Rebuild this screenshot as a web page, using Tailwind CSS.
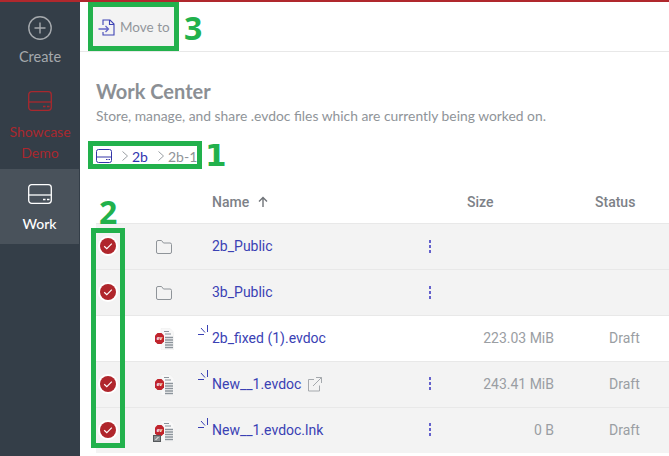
<!DOCTYPE html>
<html lang="en">
<head>
    <meta charset="UTF-8" />
    <title>Work Center</title>
    <script src="https://cdn.jsdelivr.net/npm/@tailwindcss/browser@4"></script>
</head>
<body class="bg-white font-['Roboto',sans-serif] overflow-hidden">
<div class="relative w-[669px] h-[456px] overflow-hidden">
    <div class="h-[2px] bg-[#b0282d]"></div>
    <div class="flex h-[454px]">
        <!-- sidebar -->
        <aside class="w-[80px] shrink-0 bg-[#343e48] font-['Lato',sans-serif] text-[14px] text-center">
            <div class="h-[82px] pt-[14px] text-[#a5a9ad]">
                <svg class="mx-auto" width="24" height="24" viewBox="0 0 24 24" fill="none" stroke="#a5a9ad" stroke-width="1.4"><circle cx="12" cy="12" r="11.200"/><path d="M12 6.500v11M6.500 12h11"/></svg>
                <div class="mt-[7px] leading-[20px] text-[14.500px]">Create</div>
            </div>
            <div class="h-[85px] pt-[7px] text-[#a9282e]">
                <svg class="mx-auto" width="24" height="20" viewBox="0 0 24 20" fill="none" stroke="#a9282e" stroke-width="1.3"><rect x="0.700" y="0.700" width="22.600" height="18.600" rx="3"/><path d="M0.700 11h22.600"/><path d="M15 15.500h2.500M19 15.500h2.500" stroke-width="1.6"/></svg>
                <div class="mt-[10px] leading-[21px]">Showcase<br />Demo</div>
            </div>
            <div class="h-[75px] w-[79px] bg-[#49525b] pt-[15px] text-white">
                <svg class="mx-auto" width="24" height="20" viewBox="0 0 24 20" fill="none" stroke="#ffffff" stroke-width="1.3"><rect x="0.700" y="0.700" width="22.600" height="18.600" rx="3"/><path d="M0.700 11h22.600"/><path d="M15 15.500h2.500M19 15.500h2.500" stroke-width="1.6"/></svg>
                <div class="mt-[10px] leading-[20px] font-medium">Work</div>
            </div>
        </aside>

        <main class="flex-1 min-w-0">
            <!-- toolbar -->
            <div class="h-[50px] border-b border-[#e8e8e8] pl-[13px] pt-[5px]">
                <div class="flex items-center w-[82px] h-[39px] bg-[#f3f3f3] pl-[5px] pt-[2px] font-['Lato',sans-serif] text-[13.500px] text-[#92969b]">
                    <svg width="17" height="17" viewBox="0 0 17 17" fill="none" stroke="#3f44b5" stroke-width="1.100"><path d="M5 6V1h7l4 4v11H5v-3"/><path d="M11.500 1v4.500H16"/><path d="M0.500 10h10M7.500 7l3 3-3 3" stroke="#6265c8" stroke-width="1.300"/></svg>
                    <span class="ml-[5px]">Move to</span>
                </div>
            </div>

            <div class="pl-[16px]">
                <h1 class="mt-[26px] font-['Lato',sans-serif] font-bold text-[20px] leading-[26px] text-[#8b8f94]">Work Center</h1>
                <p class="mt-[2px] font-['Lato',sans-serif] text-[13.850px] leading-[20px] text-[#8f9499]">Store, manage, and share .evdoc files which are currently being worked on.</p>
                <!-- breadcrumb -->
                <nav class="mt-[20px] flex items-center h-[20px] text-[14px] text-[#8f9499] font-['Lato',sans-serif]">
                    <svg width="16" height="14" viewBox="0 0 16 14" fill="none" stroke="#3436a8" stroke-width="1"><rect x="0.500" y="0.500" width="15" height="13" rx="2"/><path d="M0.500 8h15M10 10.500h1.500M12.500 10.500H14"/></svg>
                    <svg class="ml-[10px]" width="6" height="10" viewBox="0 0 6 10" fill="none" stroke="#9a9ea3"><path d="M0.500 0.500L5.500 5L0.500 9.500"/></svg>
                    <span class="ml-[4px] text-[#2f35b0]">2b</span>
                    <svg class="ml-[10px]" width="6" height="10" viewBox="0 0 6 10" fill="none" stroke="#9a9ea3"><path d="M0.500 0.500L5.500 5L0.500 9.500"/></svg>
                    <span class="ml-[4px]">2b-1</span>
                </nav>
            </div>

            <!-- table -->
            <div class="ml-[16px] mt-[11px] text-[14px]">
                <div class="grid grid-cols-[116px_255px_128px_1fr] items-center h-[46px] pt-[4px] font-medium text-[#7d8187]">
                    <div></div>
                    <div class="flex items-center gap-[8px]">Name
                        <svg width="12" height="12" viewBox="0 0 12 12" fill="none" stroke="#6f7378" stroke-width="1.4"><path d="M6 11V1.500M2 5.500l4-4 4 4"/></svg>
                    </div>
                    <div>Size</div>
                    <div>Status</div>
                </div>

                <div class="grid grid-cols-[24px_92px_208px_134px_1fr] items-center h-[46px] border-t border-[#e8e8e8] bg-[#f3f3f3]">
                    <div class="flex justify-center -mt-[1px]"><svg width="20" height="20" viewBox="0 0 20 20"><circle cx="10" cy="10" r="10" fill="#fff"/><circle cx="10" cy="10" r="8" fill="#b0262c"/><path d="M6.200 10.200l2.600 2.500 5-5" fill="none" stroke="#fff" stroke-width="1.200"/></svg></div>
                    <div class="pl-[36px]"><svg width="16" height="14" viewBox="0 0 16 14" fill="none" stroke="#8f9499"><path d="M.5 2a1.500 1.500 0 0 1 1.500-1.500h3.500L7.500 3H14a1.500 1.500 0 0 1 1.500 1.500V12a1.500 1.500 0 0 1-1.500 1.500H2A1.500 1.500 0 0 1 .5 12z"/></svg></div>
                    <div class="text-[#3a41b4]">2b_Public</div>
                    <div class="pl-[9px] -mt-[1px]"><svg width="2" height="13" viewBox="0 0 2 13" fill="#6461cc"><rect width="2" height="3"/><rect y="5" width="2" height="3"/><rect y="10" width="2" height="3"/></svg></div>
                    <div></div>
                </div>

                <div class="grid grid-cols-[24px_92px_208px_134px_1fr] items-center h-[46px] border-t border-[#e8e8e8] bg-[#f3f3f3]">
                    <div class="flex justify-center -mt-[1px]"><svg width="20" height="20" viewBox="0 0 20 20"><circle cx="10" cy="10" r="10" fill="#fff"/><circle cx="10" cy="10" r="8" fill="#b0262c"/><path d="M6.200 10.200l2.600 2.500 5-5" fill="none" stroke="#fff" stroke-width="1.200"/></svg></div>
                    <div class="pl-[36px]"><svg width="16" height="14" viewBox="0 0 16 14" fill="none" stroke="#8f9499"><path d="M.5 2a1.500 1.500 0 0 1 1.500-1.500h3.500L7.500 3H14a1.500 1.500 0 0 1 1.500 1.500V12a1.500 1.500 0 0 1-1.500 1.500H2A1.500 1.500 0 0 1 .5 12z"/></svg></div>
                    <div class="text-[#3a41b4]">3b_Public</div>
                    <div class="pl-[9px] -mt-[1px]"><svg width="2" height="13" viewBox="0 0 2 13" fill="#6461cc"><rect width="2" height="3"/><rect y="5" width="2" height="3"/><rect y="10" width="2" height="3"/></svg></div>
                    <div></div>
                </div>

                <div class="grid grid-cols-[24px_92px_208px_134px_1fr] items-center h-[46px] border-t border-[#e8e8e8] bg-white">
                    <div></div>
                    <div class="pl-[33px]"><svg width="21" height="22" viewBox="0 0 21 22"><path d="M8 0.500h9l4 4v17H8z" fill="#f8f8f8" stroke="#ececec" stroke-width="0.500"/><path d="M11 3.500h5M12 6h6" stroke="#8c949b"/><path d="M12 9.500h8M12 12h8M12 14.500h8M12 17h8M12 19.500h8" stroke="#8c949b" stroke-width="1.400"/><path d="M4.500 5h4L11 7.500v6L8.500 16h-4L2 13.500v-6z" fill="#c0242c"/><text x="6.500" y="12" font-size="5" font-style="italic" font-weight="700" fill="#fff" text-anchor="middle" font-family="Liberation Sans">ev</text></svg></div>
                    <div class="relative text-[#3a41b4]">2b_fixed (1).evdoc
                        <svg class="absolute left-[-14px] top-[-3px]" width="11" height="11" viewBox="0 0 11 11" fill="none" stroke="#3a41b4"><path d="M0 9.500h6M3 3l4 4.500M9.500 0v7"/></svg>
                    </div>
                    <div class="text-right text-[#9a9ea3]">223.03 MiB</div>
                    <div class="pl-[55px] text-[#9a9ea3]">Draft</div>
                </div>

                <div class="grid grid-cols-[24px_92px_208px_134px_1fr] items-center h-[46px] border-t border-[#e8e8e8] bg-[#f3f3f3]">
                    <div class="flex justify-center -mt-[1px]"><svg width="20" height="20" viewBox="0 0 20 20"><circle cx="10" cy="10" r="10" fill="#fff"/><circle cx="10" cy="10" r="8" fill="#b0262c"/><path d="M6.200 10.200l2.600 2.500 5-5" fill="none" stroke="#fff" stroke-width="1.200"/></svg></div>
                    <div class="pl-[33px]"><svg width="21" height="22" viewBox="0 0 21 22"><path d="M8 0.500h9l4 4v17H8z" fill="#f8f8f8" stroke="#ececec" stroke-width="0.500"/><path d="M11 3.500h5M12 6h6" stroke="#8c949b"/><path d="M12 9.500h8M12 12h8M12 14.500h8M12 17h8M12 19.500h8" stroke="#8c949b" stroke-width="1.400"/><path d="M4.500 5h4L11 7.500v6L8.500 16h-4L2 13.500v-6z" fill="#c0242c"/><text x="6.500" y="12" font-size="5" font-style="italic" font-weight="700" fill="#fff" text-anchor="middle" font-family="Liberation Sans">ev</text></svg></div>
                    <div class="relative flex items-center text-[#3a41b4]">New__1.evdoc
                        <svg class="ml-[6px]" width="15" height="15" viewBox="0 0 15 15" fill="none" stroke="#a5a9ad"><path d="M7 2.500H1.500v11.500h11V8.500M9 0.500h5.500V6M14.500 0.500L6 9"/></svg>
                        <svg class="absolute left-[-14px] top-[-4px]" width="11" height="11" viewBox="0 0 11 11" fill="none" stroke="#3a41b4"><path d="M0 9.500h6M3 3l4 4.500M9.500 0v7"/></svg>
                    </div>
                    <div class="flex items-center justify-between text-[#9a9ea3]">
                        <svg class="ml-[9px] -mt-[3px]" width="2" height="13" viewBox="0 0 2 13" fill="#6461cc"><rect width="2" height="3"/><rect y="5" width="2" height="3"/><rect y="10" width="2" height="3"/></svg>
                        <span>243.41 MiB</span>
                    </div>
                    <div class="pl-[55px] text-[#9a9ea3]">Draft</div>
                </div>

                <div class="grid grid-cols-[24px_92px_208px_134px_1fr] items-center h-[46px] border-t border-[#e8e8e8] bg-[#f3f3f3]">
                    <div class="flex justify-center -mt-[1px]"><svg width="20" height="20" viewBox="0 0 20 20"><circle cx="10" cy="10" r="10" fill="#fff"/><circle cx="10" cy="10" r="8" fill="#b0262c"/><path d="M6.200 10.200l2.600 2.500 5-5" fill="none" stroke="#fff" stroke-width="1.200"/></svg></div>
                    <div class="pl-[33px]"><svg width="21" height="22" viewBox="0 0 21 22"><path d="M8 0.500h9l4 4v17H8z" fill="#f8f8f8" stroke="#ececec" stroke-width="0.500"/><path d="M11 3.500h5M12 6h6" stroke="#8c949b"/><path d="M12 9.500h8M12 12h8M12 14.500h8M12 17h8M12 19.500h8" stroke="#8c949b" stroke-width="1.400"/><path d="M4.500 5h4L11 7.500v6L8.500 16h-4L2 13.500v-6z" fill="#c0242c"/><text x="6.500" y="12" font-size="5" font-style="italic" font-weight="700" fill="#fff" text-anchor="middle" font-family="Liberation Sans">ev</text><rect x="0.500" y="15.500" width="7" height="6" fill="#8a8d90" stroke="#55585b"/><path d="M2.500 20l3-3" stroke="#fff"/></svg></div>
                    <div class="relative text-[#3a41b4]">New__1.evdoc.lnk
                        <svg class="absolute left-[-14px] top-[-2px]" width="11" height="11" viewBox="0 0 11 11" fill="none" stroke="#3a41b4"><path d="M0 9.500h6M3 3l4 4.500M9.500 0v7"/></svg>
                    </div>
                    <div class="flex items-center justify-between text-[#9a9ea3]">
                        <svg class="ml-[9px] -mt-[3px]" width="2" height="13" viewBox="0 0 2 13" fill="#6461cc"><rect width="2" height="3"/><rect y="5" width="2" height="3"/><rect y="10" width="2" height="3"/></svg>
                        <span>0 B</span>
                    </div>
                    <div class="pl-[55px] text-[#9a9ea3]">Draft</div>
                </div>
            </div>
        </main>
    </div>

    <!-- green annotation boxes and numbers drawn over the page -->
    <div class="absolute left-[88px] top-[2px] w-[91px] h-[49px] border-[5px] border-[#22b14c]"></div>
    <div class="absolute left-[88px] top-[141px] w-[114px] h-[28px] border-[5px] border-[#22b14c]"></div>
    <div class="absolute left-[91px] top-[228px] w-[34px] h-[220px] border-[5px] border-[#22b14c]"></div>
    <div class="absolute left-[184px] top-[6px] font-['Open_Sans',sans-serif] font-bold text-[32px] leading-[44px] text-[#22b14c]">3</div>
    <div class="absolute left-[205px] top-[133px] font-['DejaVu_Sans',sans-serif] font-bold text-[31px] leading-[44px] text-[#22b14c]">1</div>
    <div class="absolute left-[99px] top-[190px] font-['Open_Sans',sans-serif] font-bold text-[32px] leading-[44px] text-[#22b14c]">2</div>
</div>
</body>
</html>
